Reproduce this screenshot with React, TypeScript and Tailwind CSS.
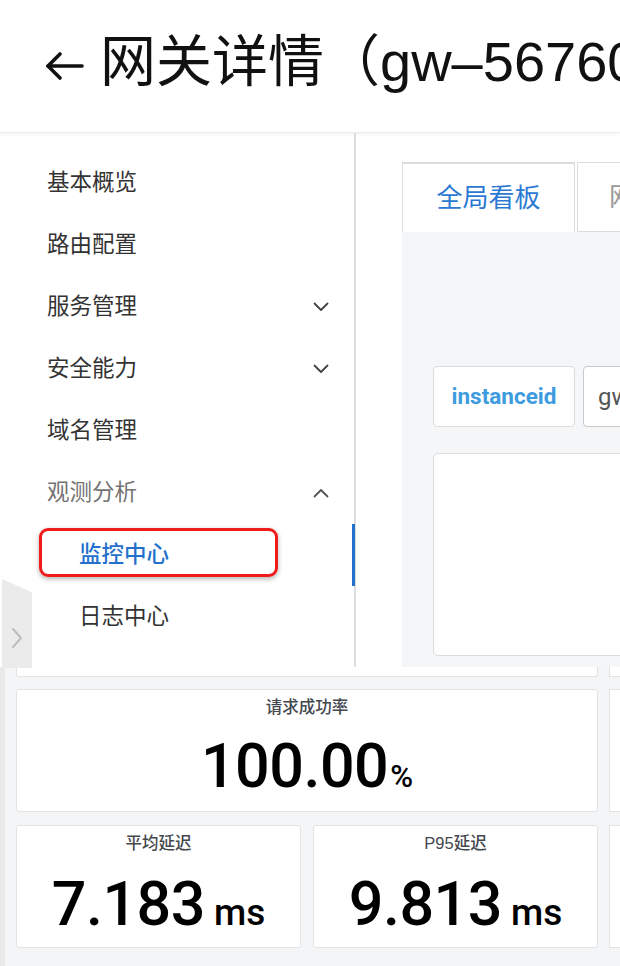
import React from "react";

const CJK = "font-['Liberation_Sans','Noto_Sans_CJK_SC',sans-serif]";

function ChevronDown() {
  return (
    <svg width="16" height="10" viewBox="0 0 16 10" fill="none">
      <path d="M1.5 1.5 L8 8 L14.5 1.5" stroke="#444" strokeWidth="1.8" strokeLinecap="round" strokeLinejoin="round" />
    </svg>
  );
}
function ChevronUp() {
  return (
    <svg width="16" height="10" viewBox="0 0 16 10" fill="none">
      <path d="M1.5 8.5 L8 2 L14.5 8.5" stroke="#555" strokeWidth="1.8" strokeLinecap="round" strokeLinejoin="round" />
    </svg>
  );
}

function MenuItem({ label, sub, chevron, muted, active }: { label: string; sub?: boolean; chevron?: "down" | "up"; muted?: boolean; active?: boolean }) {
  return (
    <div className={`relative h-[62px] flex items-center ${sub ? "pl-[79px]" : "pl-[47px]"} pr-[25px]`}>
      <span
        className={`text-[22.5px] leading-none ${active ? "text-[#2470cc] font-medium" : muted ? "text-[#737373]" : "text-[#333333]"}`}
      >
        {label}
      </span>
      {chevron && <span className="ml-auto flex items-center">{chevron === "down" ? <ChevronDown /> : <ChevronUp />}</span>}
      {active && (
        <>
          <div className="absolute left-[39px] top-[4px] w-[239px] h-[49px] rounded-[9px] border-[3px] border-[#f01c1c] shadow-[0_2px_5px_rgba(0,0,0,0.3)]" />
          <div className="absolute right-[-1px] top-0 w-[3px] h-[62px] bg-[#2470cc]" />
        </>
      )}
    </div>
  );
}

function StatCard({ title, value, unit, unitClass, gap, className, pad }: { title: string; value: string; unit: string; unitClass: string; gap: string; className: string; pad: string }) {
  return (
    <div className={`bg-white border border-[#e2e3e5] rounded-[3px] flex flex-col ${className}`}>
      <div className="pt-[7px] h-[30px] text-center text-[16.5px] leading-[20px] font-medium text-[#43474e]">{title}</div>
      <div className={`flex-1 flex items-center justify-center ${pad}`}>
        <div className={`flex items-baseline ${gap} font-['Roboto',sans-serif] text-black`}>
          <span className="text-[61px] leading-none font-medium tracking-[-0.5px]">{value}</span>
          <span className={`${unitClass} leading-none font-medium`}>{unit}</span>
        </div>
      </div>
    </div>
  );
}

export default function App() {
  return (
    <div className={`w-[620px] h-[966px] overflow-hidden bg-white flex flex-col ${CJK}`}>
      {/* Header */}
      <div className="h-[133px] shrink-0 flex items-start pt-[30px] pl-[45px] border-b border-[#ececec] shadow-[0_1px_4px_rgba(0,0,0,0.06)] whitespace-nowrap overflow-hidden">
        <svg width="40" height="30" viewBox="0 0 40 30" fill="none" className="mt-[21px] mr-[15px] shrink-0">
          <path d="M3 15 H37" stroke="#111" strokeWidth="3.6" strokeLinecap="round" />
          <path d="M15 3 L3 15 L15 27" stroke="#111" strokeWidth="3.6" strokeLinecap="round" strokeLinejoin="round" />
        </svg>
        <span className="text-[56px] leading-[64px] text-[#111]">网关详情（gw–56760</span>
      </div>

      {/* Main */}
      <div className="h-[534px] shrink-0 flex relative">
        {/* Sidebar */}
        <div className="w-[356px] shrink-0 border-r-2 border-[#dedede] pt-[19px] relative">
          <MenuItem label="基本概览" />
          <MenuItem label="路由配置" />
          <MenuItem label="服务管理" chevron="down" />
          <MenuItem label="安全能力" chevron="down" />
          <MenuItem label="域名管理" />
          <MenuItem label="观测分析" chevron="up" muted />
          <MenuItem label="监控中心" sub active />
          <MenuItem label="日志中心" sub />
        </div>
        {/* collapse tab */}
        <div className="absolute left-[2px] top-[446px] w-[30px] h-[89px] bg-[#ebebeb] [clip-path:polygon(0_0,100%_15%,100%_100%,0_100%)] flex items-center justify-center">
          <svg width="12" height="22" viewBox="0 0 12 22" fill="none" className="mt-[28px]">
            <path d="M2 2 L10 11 L2 20" stroke="#bdbdbd" strokeWidth="2" strokeLinecap="round" strokeLinejoin="round" />
          </svg>
        </div>

        {/* Content */}
        <div className="flex-1 flex flex-col pt-[29px] pl-[46px] overflow-hidden">
          <div className="flex h-[70px] shrink-0">
            <div className="w-[173px] shrink-0 border-t-2 border-[#2b79d2] border-l border-r border-[#dcdcdc] bg-white flex items-center justify-center">
              <span className="text-[26px] leading-none text-[#2b79d2]">全局看板</span>
            </div>
            <div className="ml-[2px] w-[120px] shrink-0 border-t border-l border-[#dcdcdc] border-b flex items-center pl-[31px]">
              <span className="text-[26px] leading-none text-[#999]">网关</span>
            </div>
          </div>
          <div className="flex-1 bg-[#f5f6f8] pl-[31px] pt-[134px]">
            <div className="flex gap-[8px]">
              <div className="w-[142px] h-[61px] shrink-0 bg-white border border-[#dcdcdc] rounded-[4px] flex items-center justify-center">
                <span className="text-[22.5px] font-bold text-[#3d9be0] font-['Roboto',sans-serif]">instanceid</span>
              </div>
              <div className="w-[120px] h-[61px] shrink-0 bg-white border border-[#c9c9c9] rounded-[4px] flex items-center pl-[14px]">
                <span className="text-[24px] text-[#555] font-['Roboto',sans-serif]">gw-5676</span>
              </div>
            </div>
            <div className="mt-[26px] h-[203px] w-[300px] bg-white border border-[#dcdcdc] rounded-[5px]" />
          </div>
        </div>
      </div>

      {/* Dashboard */}
      <div className="flex-1 flex bg-[#f4f5f6]">
        <div className="w-[5px] bg-[#eaeaea] shrink-0" />
        <div className="flex-1 pl-[11px] flex flex-col">
          <div className="flex h-[10px] gap-[11px]">
            <div className="w-[582px] shrink-0 bg-white border-x border-b border-[#e2e3e5] rounded-b-[3px]" />
            <div className="flex-1 bg-white border-l border-b border-[#e2e3e5]" />
          </div>
          <div className="flex h-[123px] mt-[12px] gap-[11px]">
            <StatCard title="请求成功率" value="100.00" unit="%" unitClass="text-[31px]" gap="gap-[2px]" className="w-[582px] shrink-0" pad="pt-[2px]" />
            <div className="flex-1 bg-white border-l border-y border-[#e2e3e5]" />
          </div>
          <div className="flex h-[123px] mt-[13px]">
            <StatCard title="平均延迟" value="7.183" unit="ms" unitClass="text-[37px]" gap="gap-[9px]" className="w-[285px] shrink-0" pad="pt-[6px]" />
            <StatCard title="P95延迟" value="9.813" unit="ms" unitClass="text-[37px]" gap="gap-[9px]" className="w-[285px] shrink-0 ml-[12px]" pad="pt-[6px]" />
            <div className="flex-1 ml-[11px] bg-white border-l border-y border-[#e2e3e5]" />
          </div>
        </div>
      </div>
    </div>
  );
}
